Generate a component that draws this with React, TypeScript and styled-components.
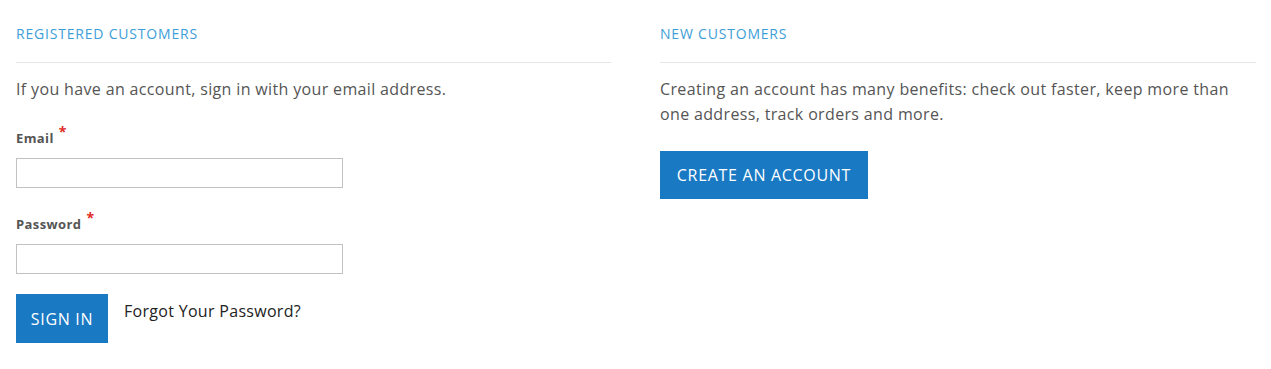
import styled, { createGlobalStyle } from 'styled-components';

const GlobalStyle = createGlobalStyle`
  body {
    margin: 0;
    background: #fff;
    font-family: 'Open Sans', 'Liberation Sans', sans-serif;
    color: #555;
  }
`;

const Page = styled.div`
  display: grid;
  grid-template-columns: 595px 596px;
  column-gap: 49px;
  padding: 24px 15px 0 16px;
`;

const Column = styled.section`
  display: flex;
  flex-direction: column;
`;

const Heading = styled.h2`
  margin: 0;
  padding-bottom: 19px;
  border-bottom: 1px solid #e6e6e6;
  font-size: 14px;
  font-weight: 400;
  line-height: 19px;
  letter-spacing: 0.8px;
  color: #3d9ed8;
`;

const Intro = styled.p`
  margin: 14px 0 0;
  font-size: 16px;
  line-height: 25px;
  letter-spacing: 0.35px;
  color: #555;
`;

const Field = styled.div<{ $top: number }>`
  display: flex;
  flex-direction: column;
  margin-top: ${(p) => p.$top}px;
`;

const Label = styled.label`
  font-size: 13px;
  font-weight: 700;
  line-height: 18px;
  color: #555;
  letter-spacing: 0.4px;
`;

const Star = styled.span`
  color: #e02b27;
  font-size: 14px;
  margin-left: 5px;
  position: relative;
  top: -6px;
`;

const TextInput = styled.input`
  box-sizing: border-box;
  width: 327px;
  height: 30px;
  margin-top: 11px;
  border: 1px solid #c2c2c2;
  background: #fff;
  font: inherit;
`;

const Actions = styled.div`
  display: flex;
  align-items: flex-start;
  gap: 16px;
  margin-top: 20px;
`;

const Button = styled.button<{ $w: number; $h: number }>`
  box-sizing: border-box;
  width: ${(p) => p.$w}px;
  height: ${(p) => p.$h}px;
  border: none;
  background: #1979c3;
  color: #fff;
  font-family: 'Open Sans', 'Liberation Sans', sans-serif;
  font-size: 16px;
  letter-spacing: 0.7px;
  padding: 0;
  cursor: pointer;
`;

const Forgot = styled.a`
  margin-top: 6px;
  font-size: 16px;
  line-height: 22px;
  letter-spacing: 0.3px;
  color: #222;
  text-decoration: none;
`;

const CreateWrap = styled.div`
  margin-top: 24px;
`;

export default function App() {
  return (
    <>
      <GlobalStyle />
      <Page>
        <Column>
          <Heading>REGISTERED CUSTOMERS</Heading>
          <Intro>If you have an account, sign in with your email address.</Intro>
          <Field $top={27}>
            <Label>
              Email<Star>*</Star>
            </Label>
            <TextInput type="email" />
          </Field>
          <Field $top={27}>
            <Label>
              Password<Star>*</Star>
            </Label>
            <TextInput type="password" />
          </Field>
          <Actions>
            <Button $w={92} $h={49}>SIGN IN</Button>
            <Forgot href="#">Forgot Your Password?</Forgot>
          </Actions>
        </Column>
        <Column>
          <Heading>NEW CUSTOMERS</Heading>
          <Intro>
            Creating an account has many benefits: check out faster, keep more than one address, track
            orders and more.
          </Intro>
          <CreateWrap>
            <Button $w={208} $h={48}>CREATE AN ACCOUNT</Button>
          </CreateWrap>
        </Column>
      </Page>
    </>
  );
}
